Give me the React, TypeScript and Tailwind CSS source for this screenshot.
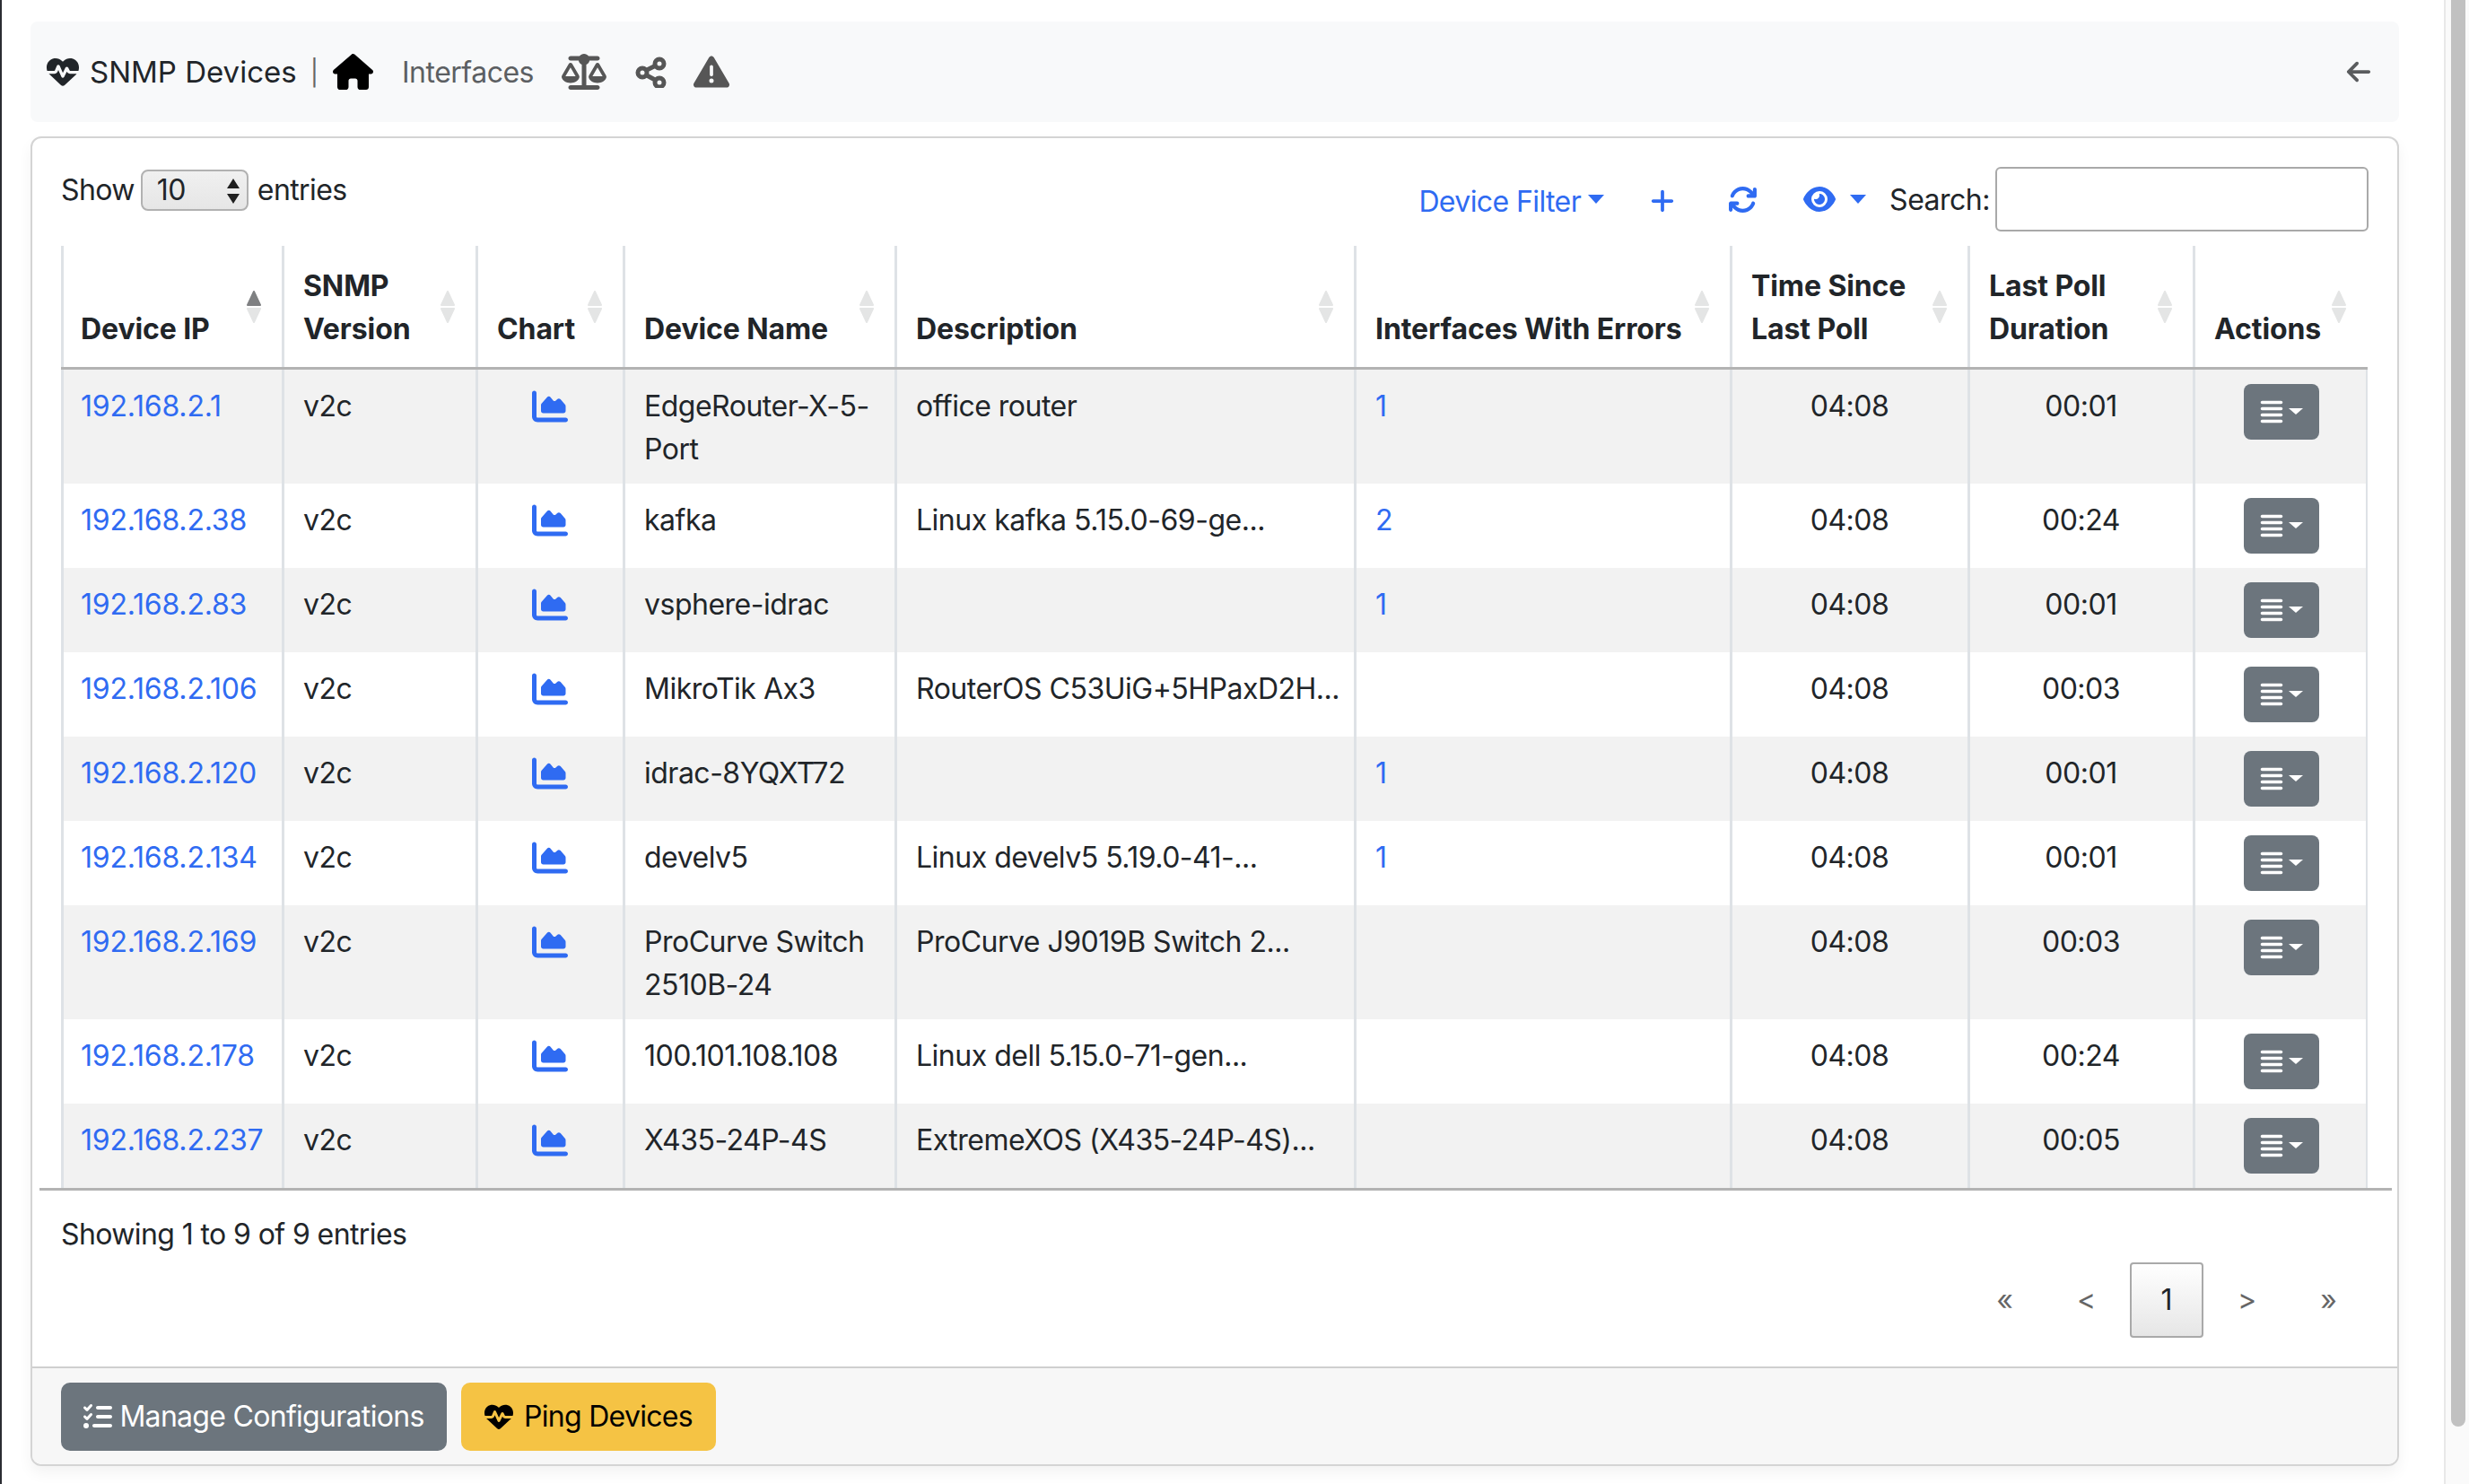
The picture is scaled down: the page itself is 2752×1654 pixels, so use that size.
import React from 'react';
import {
  FaHeartPulse,
  FaHouse,
  FaScaleBalanced,
  FaTriangleExclamation,
  FaArrowLeft,
  FaChartArea,
  FaArrowsRotate,
  FaEye,
  FaPlus,
  FaAlignJustify,
  FaListCheck,
} from 'react-icons/fa6';

interface Device {
  ip: string;
  name: string;
  description: string;
  errors: string;
  duration: string;
}

const devices: Device[] = [
  { ip: '192.168.2.1', name: 'EdgeRouter-X-5-Port', description: 'office router', errors: '1', duration: '00:01' },
  { ip: '192.168.2.38', name: 'kafka', description: 'Linux kafka 5.15.0-69-ge...', errors: '2', duration: '00:24' },
  { ip: '192.168.2.83', name: 'vsphere-idrac', description: '', errors: '1', duration: '00:01' },
  { ip: '192.168.2.106', name: 'MikroTik Ax3', description: 'RouterOS C53UiG+5HPaxD2H...', errors: '', duration: '00:03' },
  { ip: '192.168.2.120', name: 'idrac-8YQXT72', description: '', errors: '1', duration: '00:01' },
  { ip: '192.168.2.134', name: 'develv5', description: 'Linux develv5 5.19.0-41-...', errors: '1', duration: '00:01' },
  { ip: '192.168.2.169', name: 'ProCurve Switch 2510B-24', description: 'ProCurve J9019B Switch 2...', errors: '', duration: '00:03' },
  { ip: '192.168.2.178', name: '100.101.108.108', description: 'Linux dell 5.15.0-71-gen...', errors: '', duration: '00:24' },
  { ip: '192.168.2.237', name: 'X435-24P-4S', description: 'ExtremeXOS (X435-24P-4S)...', errors: '', duration: '00:05' },
];

const columns = [
  { label: 'Device IP', width: 'w-[246px] pl-[19px]', active: true },
  { label: 'SNMP Version', width: 'w-[216px] pl-[21px]' },
  { label: 'Chart', width: 'w-[164px] pl-[21px]' },
  { label: 'Device Name', width: 'w-[303px] pl-[21px]' },
  { label: 'Description', width: 'w-[512px] pl-[21px]' },
  { label: 'Interfaces With Errors', width: 'w-[419px] pl-[21px]' },
  { label: 'Time Since Last Poll', width: 'w-[265px] pl-[21px]' },
  { label: 'Last Poll Duration', width: 'w-[251px] pl-[21px]' },
  { label: 'Actions', width: 'w-[192px] pl-[21px]' },
];

const SortArrows = ({ active }: { active?: boolean }) => (
  <svg className="absolute right-[23px] top-[50px]" width="16" height="36" viewBox="0 0 16 36" strokeWidth="2" strokeLinejoin="round">
    <path d="M8 1 L15 16 H1 Z" fill={active ? '#7f8082' : '#e4e5e5'} stroke={active ? '#7f8082' : '#e4e5e5'} />
    <path d="M8 35 L15 20 H1 Z" fill="#e4e5e5" stroke="#e4e5e5" />
  </svg>
);

const Caret = ({ className }: { className: string }) => (
  <span className={`inline-block border-x-[9px] border-t-[10px] border-x-transparent ${className}`} />
);

const ShareIcon = () => (
  <svg className="ml-[32px] h-[35px] w-[35px]" viewBox="0 0 35 35" fill="none" stroke="#565656" strokeWidth="5">
    <circle cx="8" cy="18" r="5" />
    <circle cx="27" cy="8" r="5" />
    <circle cx="27" cy="29" r="5" />
    <path d="M12 15.5 L23 10 M12 20.5 L23 26.5" />
  </svg>
);

const bodyCell = 'pr-[22px] align-top border-l-[3px] border-[#dee2e6] leading-[48px] tracking-[-0.5px]';

export default function App() {
  return (
    <div className="flex h-[1654px] overflow-hidden border-l-2 border-[#2b2d33] bg-white font-['Inter',sans-serif] text-[32px] text-[#212529]">
      <div className="min-w-0 flex-1 pl-[32px] pr-[50px] pt-[24px]">
        <nav className="flex h-[112px] items-center rounded-[8px] bg-[#f8f9fa] pl-[18px] pr-[30px]">
          <FaHeartPulse className="h-[36px] w-[36px] text-[#212529]" />
          <span className="ml-[12px] mt-[2px] text-[33px]">SNMP Devices</span>
          <span className="ml-[15px] mt-[2px] text-[28px] text-[#666]">|</span>
          <FaHouse className="ml-[16px] h-[40px] w-[45px] text-black" />
          <span className="ml-[32px] mt-[2px] tracking-[-0.5px] text-[#5c5f62]">Interfaces</span>
          <FaScaleBalanced className="ml-[31px] h-[40px] w-[50px] text-[#565656]" />
          <ShareIcon />
          <FaTriangleExclamation className="ml-[30px] h-[40px] w-[40px] text-[#565656]" />
          <FaArrowLeft className="ml-auto h-[30px] w-[30px] text-[#5a5c5e]" />
        </nav>

        <div className="mt-[16px] flex h-[1482px] flex-col rounded-[12px] border-2 border-[#d4d4d4] bg-white shadow-[0_8px_16px_rgba(0,0,0,0.05)]">
          <div className="flex-1 px-[32px]">
            <div className="flex h-[120px] items-start justify-between">
              <div className="mt-[34px] flex items-center tracking-[-0.6px]">
                <span>Show</span>
                <div className="relative ml-[7px] mr-[10px] flex h-[46px] w-[120px] items-center rounded-[8px] border-2 border-[#b1b1b1] bg-linear-to-b from-[#f0f0f0] to-[#e6e6e6] pl-[16px]">
                  10
                  <svg className="absolute right-[8px] top-[8px]" width="14" height="28" viewBox="0 0 14 28">
                    <path d="M7 0 L14 11 H0 Z M7 28 L0 17 H14 Z" fill="#1f1f1f" />
                  </svg>
                </div>
                <span>entries</span>
              </div>
              <div className="mt-[32px] flex items-center">
                <span className="mt-[6px] tracking-[-0.6px] text-[#2f6bf2]">Device Filter</span>
                <Caret className="ml-[8px] border-t-[#2f6bf2]" />
                <FaPlus className="ml-[50px] mt-[4px] h-[30px] w-[30px] text-[#2f6bf2]" />
                <FaArrowsRotate className="ml-[58px] h-[33px] w-[33px] text-[#2f6bf2]" />
                <FaEye className="ml-[51px] h-[36px] w-[36px] text-[#2f6bf2]" />
                <Caret className="ml-[16px] border-t-[#2f6bf2]" />
                <span className="ml-[26px] mt-[2px] tracking-[-0.5px]">Search:</span>
                <div className="ml-[6px] h-[72px] w-[416px] rounded-[6px] border-2 border-[#a9a9a9]" />
              </div>
            </div>

            <div className="-ml-[24px] -mr-[26px] border-b-[3px] border-[#b3b3b3] pl-[24px] pr-[26px]">
              <table className="w-[2568px] table-fixed border-collapse">
                <thead>
                  <tr>
                    {columns.map((col) => (
                      <th
                        key={col.label}
                        className={`relative h-[136px] border-b-[3px] border-l-[3px] border-b-[#b3b3b3] border-l-[#dee2e6] pb-[18px] pr-[44px] pt-[14px] text-left align-bottom font-bold leading-[48px] tracking-[-0.1px] ${col.width}`}
                      >
                        {col.label}
                        <SortArrows active={col.active} />
                      </th>
                    ))}
                  </tr>
                </thead>
                <tbody>
                  {devices.map((d, i) => (
                    <tr key={d.ip} className={i % 2 === 0 ? 'bg-[#f2f2f2]' : 'bg-white'}>
                      <td className={`${bodyCell} whitespace-nowrap pl-[19px] pt-[17px] text-[#2f6bf2] tracking-[-0.2px]!`}>{d.ip}</td>
                      <td className={`${bodyCell} pl-[21px] pt-[17px]`}>v2c</td>
                      <td className={`${bodyCell} pl-[21px] pt-[16px] text-center`}>
                        <FaChartArea className="mx-auto mt-[5px] h-[40px] w-[40px] text-[#2f6bf2]" />
                      </td>
                      <td className={`${bodyCell} pb-[14px] pl-[21px] pt-[17px]`}>{d.name}</td>
                      <td className={`${bodyCell} whitespace-nowrap pl-[21px] pt-[17px]`}>{d.description}</td>
                      <td className={`${bodyCell} pl-[21px] pt-[17px] text-[#2f6bf2]`}>{d.errors}</td>
                      <td className={`${bodyCell} pl-[21px] pt-[17px] text-center`}>04:08</td>
                      <td className={`${bodyCell} pl-[21px] pt-[17px] text-center`}>{d.duration}</td>
                      <td className={`${bodyCell} border-r-2 pb-[16px] pl-[24px] pt-[16px] text-center`}>
                        <div className="mx-auto flex h-[62px] w-[84px] items-center justify-center rounded-[8px] bg-[#6c757d] text-white">
                          <FaAlignJustify className="h-[28px] w-[26px]" />
                          <span className="ml-[6px] inline-block border-x-[8px] border-t-[7px] border-x-transparent border-t-white" />
                        </div>
                      </td>
                    </tr>
                  ))}
                </tbody>
              </table>
            </div>

            <div className="mt-[25px] leading-[48px] tracking-[-0.6px]">Showing 1 to 9 of 9 entries</div>
            <div className="-mr-[1px] mt-[7px] flex items-center justify-end text-[#666]">
              <span className="flex h-[84px] w-[91px] items-center justify-center">«</span>
              <span className="mr-[3px] flex h-[84px] w-[91px] items-center justify-center">&lt;</span>
              <span className="flex h-[84px] w-[82px] items-center justify-center rounded-[4px] border-2 border-[#a9a9a9] bg-linear-to-b from-white to-[#e6e6e6] text-[#212529]">1</span>
              <span className="ml-[3px] flex h-[84px] w-[91px] items-center justify-center">&gt;</span>
              <span className="flex h-[84px] w-[91px] items-center justify-center">»</span>
            </div>
          </div>

          <div className="flex h-[109px] shrink-0 items-center gap-[16px] rounded-b-[10px] border-t-2 border-[#cfcfcf] bg-[#f7f7f7] px-[32px] tracking-[-0.7px]">
            <button className="flex h-[76px] w-[430px] items-center justify-center rounded-[10px] bg-[#6c757d] text-white">
              <FaListCheck className="mr-[8px] h-[32px] w-[32px]" />
              Manage Configurations
            </button>
            <button className="flex h-[76px] w-[284px] items-center justify-center rounded-[10px] bg-[#f5c344] text-black">
              <FaHeartPulse className="mr-[12px] h-[32px] w-[32px]" />
              Ping Devices
            </button>
          </div>
        </div>
      </div>

      <div className="h-full w-[28px] shrink-0 border-l-2 border-[#e8e8e8] bg-[#fafafa] px-[6px]">
        <div className="h-[1590px] w-[16px] rounded-b-full bg-[#c1c1c1]" />
      </div>
    </div>
  );
}
